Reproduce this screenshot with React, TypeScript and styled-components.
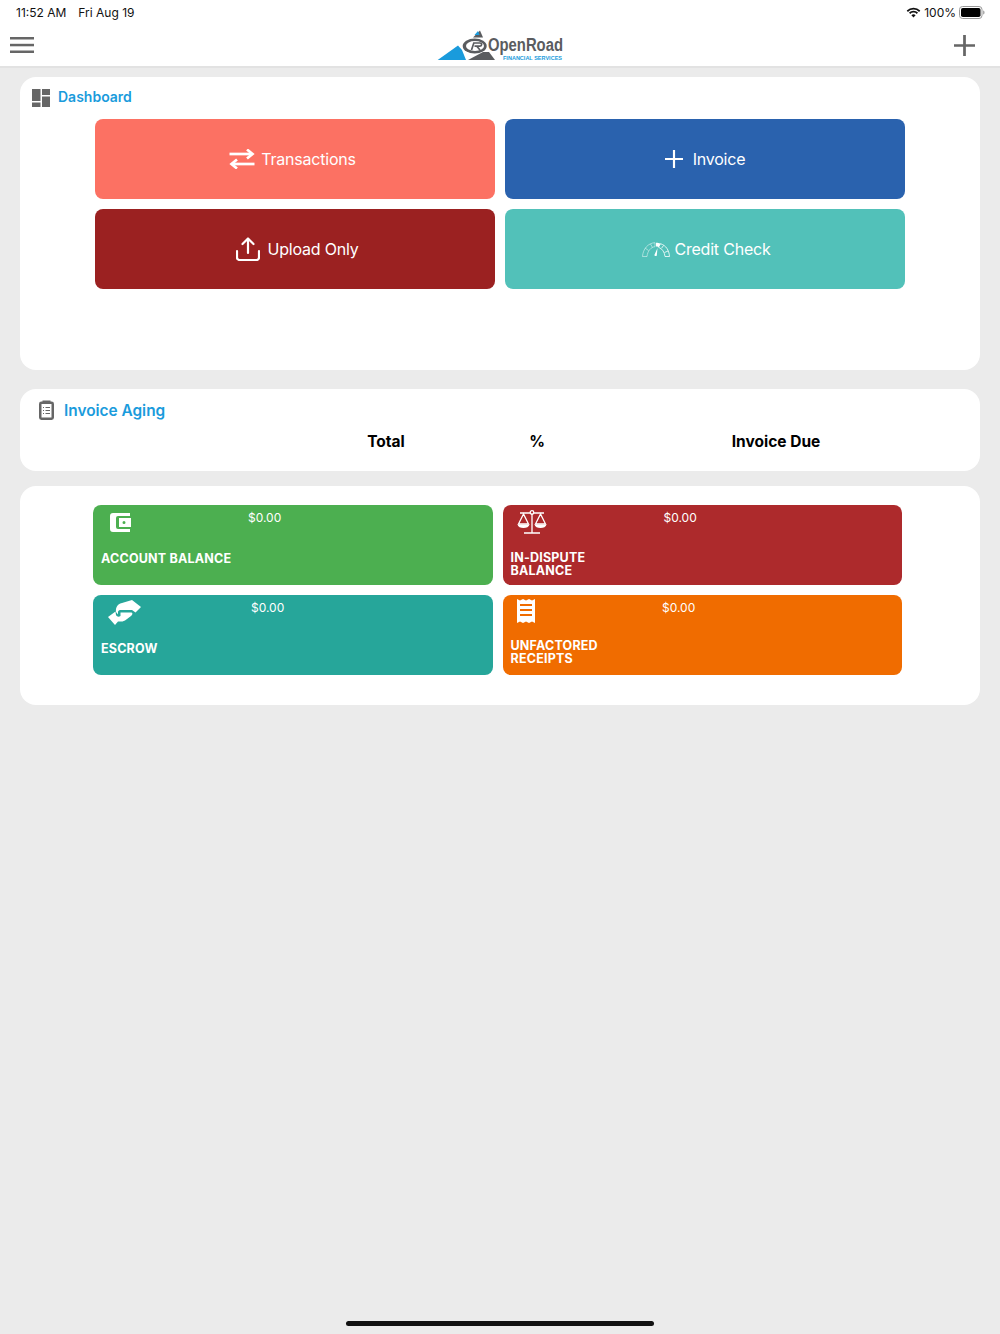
import React from "react";
import styled, { createGlobalStyle } from "styled-components";

const Global = createGlobalStyle`
  html, body { margin: 0; padding: 0; background: #ebebeb; }
  body { font-family: Inter, "Noto Sans", "Liberation Sans", sans-serif; }
  * { box-sizing: border-box; }
`;

const Page = styled.div`
  width: 1000px;
  height: 1334px;
  display: flex;
  flex-direction: column;
  background: #ebebeb;
  overflow: hidden;
`;

const Header = styled.header`
  background: #fff;
  height: 68px;
  border-bottom: 2px solid #e2e2e2;
  flex: none;
`;

const StatusBar = styled.div`
  height: 24px;
  padding: 0 15px 0 16px;
  display: flex;
  align-items: center;
  justify-content: space-between;
  font-size: 12px;
  color: #111;
`;

const StatusGroup = styled.div<{ $gap: number }>`
  display: flex;
  align-items: center;
  gap: ${(p) => p.$gap}px;
`;

const NavBar = styled.div`
  height: 42px;
  padding: 0 25px 0 10px;
  display: grid;
  grid-template-columns: 415px 150px 1fr;
  align-items: center;
`;

const NavEnd = styled.div`
  display: flex;
  justify-content: flex-end;
`;

const NavStart = styled.div`
  display: flex;
`;

const Content = styled.main`
  padding: 9px 20px 0;
  display: flex;
  flex-direction: column;
`;

const Card = styled.section<{ $height: number; $after: number }>`
  background: #fff;
  border-radius: 16px;
  height: ${(p) => p.$height}px;
  margin-bottom: ${(p) => p.$after}px;
`;

const DashHead = styled.div`
  height: 42px;
  padding: 0 0 0 12px;
  display: flex;
  align-items: center;
  gap: 8px;
  font-size: 14px;
  font-weight: 600;
  color: #1a9bdc;
`;

const DashTitle = styled.span`
  padding-bottom: 4px;
`;

const ActionGrid = styled.div`
  width: 810px;
  margin: 0 auto;
  display: grid;
  grid-template-columns: 400px 400px;
  grid-auto-rows: 80px;
  gap: 10px;
`;

const ActionButton = styled.button<{ $bg: string; $gap: number; $left?: number; $right?: number }>`
  border: 0;
  border-radius: 8px;
  background: ${(p) => p.$bg};
  color: #fff;
  font: 400 16px Inter, "Noto Sans", sans-serif;
  letter-spacing: -0.2px;
  display: flex;
  align-items: center;
  justify-content: center;
  gap: ${(p) => p.$gap}px;
  padding: 0 ${(p) => p.$right ?? 0}px 0 ${(p) => p.$left ?? 0}px;
`;

const AgingHead = styled.div`
  height: 42px;
  padding: 0 0 0 19px;
  display: flex;
  align-items: center;
  gap: 10px;
  font-size: 15.4px;
  font-weight: 600;
  color: #1a9bdc;
`;

const AgingColumns = styled.div`
  display: grid;
  grid-template-columns: 286px 160px 142px 336px;
  padding-top: 1px;
  font-size: 15.5px;
  font-weight: 700;
  color: #000;
  text-align: center;
  line-height: 20px;
`;

const StatGrid = styled.div`
  width: 809px;
  margin-left: 73px;
  padding-top: 19px;
  display: grid;
  grid-template-columns: 400px 399.5px;
  grid-auto-rows: 80px;
  gap: 10px 9.5px;
`;

const StatTile = styled.div<{ $bg: string }>`
  background: ${(p) => p.$bg};
  border-radius: 8px;
  color: #fff;
  padding: 0 8px;
`;

const StatTop = styled.div<{ $valueLeft: number }>`
  height: 36px;
  display: grid;
  grid-template-columns: ${(p) => p.$valueLeft}px 1fr;
  font-size: 12px;
  line-height: 15px;
`;

const StatIcon = styled.div<{ $x: number; $y: number }>`
  padding: ${(p) => p.$y}px 0 0 ${(p) => p.$x}px;
  line-height: 0;
`;

const StatValue = styled.div`
  padding-top: 5px;
`;

const StatLabel = styled.div<{ $top: number }>`
  padding-top: ${(p) => p.$top}px;
  font-size: 12.5px;
  font-weight: 700;
  line-height: 12.5px;
  letter-spacing: 0.2px;
  white-space: pre-line;
`;

const HomeBar = styled.div`
  width: 308px;
  height: 5px;
  border-radius: 3px;
  background: #111;
  margin: auto auto 8px;
`;

const MenuIcon = () => (
  <svg width="24" height="16" viewBox="0 0 24 16">
    <g fill="#666">
      <rect y="0" width="24" height="2.500" />
      <rect y="6.800" width="24" height="2.500" />
      <rect y="13.500" width="24" height="2.500" />
    </g>
  </svg>
);

const PlusIcon = ({ size, color, weight }: { size: number; color: string; weight: number }) => (
  <svg width={size} height={size} viewBox="0 0 20 20">
    <path d="M10 0V20M0 10H20" stroke={color} strokeWidth={weight} fill="none" />
  </svg>
);

const WifiIcon = () => (
  <svg width="15" height="11" viewBox="0 0 15 11">
    <path d="M7.5 2.6a8 8 0 0 1 5.6 2.3l1.2-1.3A9.800 9.800 0 0 0 7.500.8 9.800 9.800 0 0 0 .7 3.600l1.200 1.300a8 8 0 0 1 5.600-2.300z" fill="#111" />
    <path d="M7.500 5.600a4.500 4.500 0 0 1 3.300 1.300l1.200-1.300a6.300 6.300 0 0 0-9 0l1.200 1.300a4.500 4.500 0 0 1 3.300-1.300z" fill="#111" />
    <path d="M7.500 10.500 9.600 8.300a3 3 0 0 0-4.200 0z" fill="#111" />
  </svg>
);

const BatteryIcon = () => (
  <svg width="26" height="13" viewBox="0 0 26 13">
    <rect x="0.500" y="0.500" width="22.500" height="12" rx="3" fill="none" stroke="#999" />
    <rect x="2" y="2" width="19.500" height="9" rx="1.800" fill="#000" />
    <path d="M24.200 4.500c.9.300 1.300 1.100 1.300 2s-.4 1.700-1.300 2z" fill="#999" />
  </svg>
);

const Logo = () => (
  <svg width="150" height="34" viewBox="0 0 150 34">
    <g transform="translate(12 0)">
      <path d="M.7 32 21 17.500 25 22 29 32z" fill="#1a9bdc" />
      <path d="M31 32 46 24l6 0 6 8z" fill="#5a5c5f" />
      <path d="M36 9.500 43 2.500 46 9.500z" fill="#5a5c5f" />
      <path d="M37.500 7 41 3 42.500 7z" fill="#1a9bdc" />
      <ellipse cx="37.700" cy="18" rx="12" ry="7.500" fill="#5a5c5f" />
      <ellipse cx="38" cy="18" rx="9" ry="5" fill="#fff" />
      <path d="M34.500 22 36.800 15H43c2.200 0 2.200 3.200 0 3.200H37.500M40 18.500 43 22" fill="none" stroke="#5a5c5f" strokeWidth="1.700" />
      <text x="51" y="22.500" fontFamily="Liberation Sans, sans-serif" fontSize="17.500" fontWeight="700" fill="#5a5c5f" textLength="75" lengthAdjust="spacingAndGlyphs">OpenRoad</text>
      <text x="66" y="31.500" fontFamily="Liberation Sans, sans-serif" fontSize="6" fontWeight="700" fill="#1a9bdc" textLength="59" lengthAdjust="spacingAndGlyphs">FINANCIAL SERVICES</text>
    </g>
  </svg>
);

const DashIcon = () => (
  <svg width="18" height="18" viewBox="0 0 18 18">
    <g fill="#666">
      <rect x="0" y="0" width="8.500" height="12" />
      <rect x="0" y="13.500" width="8.500" height="4.500" />
      <rect x="10" y="0" width="8" height="6" />
      <rect x="10" y="7.500" width="8" height="10.500" />
    </g>
  </svg>
);

const ClipboardIcon = () => (
  <svg width="15" height="20" viewBox="0 0 15 20">
    <rect x="1.250" y="2.750" width="12.500" height="16" rx="1.200" fill="none" stroke="#666" strokeWidth="2.500" />
    <rect x="3.500" y="0.500" width="8" height="3.500" fill="#666" />
    <path d="M4 7.500h1M6.500 7.500H11M4 10.500h1M6.500 10.500H11M4 13.500h1M6.500 13.500H11" stroke="#666" strokeWidth="1.200" />
  </svg>
);

const TransferIcon = () => (
  <svg width="26" height="20" viewBox="0 0 26 20">
    <g fill="none" stroke="#fff" strokeWidth="2.700">
      <path d="M0.500 5H23" />
      <path d="M18 .5 23.500 5 18 9.500" />
      <path d="M25.500 15H3" />
      <path d="M8 10.500 2.500 15 8 19.500" />
    </g>
  </svg>
);

const UploadIcon = () => (
  <svg width="24" height="24" viewBox="0 0 24 24">
    <g fill="none" stroke="#fff" strokeWidth="2.200" strokeLinecap="round" strokeLinejoin="round">
      <path d="M12 16V1.500M6.500 7 12 1.500 17.500 7" />
      <path d="M1 14v6.500a2.500 2.500 0 0 0 2.500 2.500h17a2.500 2.500 0 0 0 2.500-2.500V14" />
    </g>
  </svg>
);

const GaugeIcon = () => (
  <svg width="28" height="15" viewBox="0 0 28 15">
    <g fill="none" stroke="#fff" strokeWidth="0.700" opacity="0.700">
      <path d="M0.500 14.500C1 7 6 1 13 .7v4C9 5 5.500 9 5 14.500z" />
      <path d="M3 6l3.500 2.500M8.500 2l2 3.500" />
    </g>
    <path d="M14 .7c2 0 3 .3 4.500 1l-2 3.500c-1-.5-1.500-.6-2.500-.6z" fill="#fff" />
    <path d="M18.500 1.700C24 3.500 27 8 27.500 14.500H23C22.500 10 20.500 7 16.500 5.200zM21.500 3.500l-2 2.800M26 9l-3.500 1.500" fill="none" stroke="#fff" strokeWidth="0.800" />
    <path d="M15.500 6 14.800 13.500a1.300 1.300 0 0 1-2.400-.6z" fill="#fff" />
  </svg>
);

const WalletIcon = () => (
  <svg width="21" height="19" viewBox="0 0 21 19">
    <path fillRule="evenodd" d="M3 0h17v3H8a2 2 0 0 0-2 2v9a2 2 0 0 0 2 2h12v3H3a3 3 0 0 1-3-3V3a3 3 0 0 1 3-3zM9 5h12v9H9zm5 3a1.500 1.500 0 1 0 0 3 1.500 1.500 0 0 0 0-3z" fill="#fff" />
  </svg>
);

const ScalesIcon = () => (
  <svg width="30" height="25" viewBox="0 0 30 25">
    <g fill="none" stroke="#fff" strokeWidth="1.300">
      <path d="M15 3.500V23M7 23h16M3 3h10M17 3h10" />
      <circle cx="15" cy="2.500" r="1.800" />
      <path d="M6.500 4 1.500 14h10zM23.500 4l-5 10h10z" />
    </g>
    <path d="M.5 14.500h12c-.5 2.500-3 3.500-6 3.500s-5.500-1-6-3.500zM17.500 14.500h12c-.5 2.500-3 3.500-6 3.500s-5.500-1-6-3.500z" fill="#fff" />
  </svg>
);

const HandshakeIcon = () => (
  <svg width="33" height="25" viewBox="0 0 33 25">
    <path d="M24 0 33 7 27.500 12.500 24 10H12c-1 0-2 1-2 2v2.500L8 12C7.500 8 9 4 14 3z" fill="#fff" />
    <path d="M0 17 7.500 11.500 8 15c1 2 3 2 4.500 1v-3.500H23.500c1.500.5 1 2.500-.5 3.500L17 20.500c-3 1.500-5 1-7 1L7 25z" fill="#fff" />
  </svg>
);

const ReceiptIcon = () => (
  <svg width="18" height="24" viewBox="0 0 18 24">
    <path fillRule="evenodd" d="M0 0l3 1.500L6 0l3 1.500L12 0l3 1.500L18 0v24l-3-1.500-3 1.500-3-1.500L6 24l-3-1.500L0 24zM3 5v2h12V5zm0 5v2h12v-2zm0 5v2h12v-2z" fill="#fff" />
  </svg>
);

const stats = [
  { bg: "#4caf50", value: "$0.00", valueLeft: 147, x: 9, y: 8, icon: <WalletIcon />, label: "ACCOUNT BALANCE", top: 12 },
  { bg: "#ad2a2c", value: "$0.00", valueLeft: 153, x: 6, y: 5, icon: <ScalesIcon />, label: "IN-DISPUTE\nBALANCE", top: 11 },
  { bg: "#26a69a", value: "$0.00", valueLeft: 150, x: 7, y: 5, icon: <HandshakeIcon />, label: "ESCROW", top: 12 },
  { bg: "#f06c00", value: "$0.00", valueLeft: 151.5, x: 6, y: 4, icon: <ReceiptIcon />, label: "UNFACTORED\nRECEIPTS", top: 9 },
];

export default function App() {
  return (
    <Page>
      <Global />
      <Header>
        <StatusBar>
          <StatusGroup $gap={12}>
            <span>11:52 AM</span>
            <span>Fri Aug 19</span>
          </StatusGroup>
          <StatusGroup $gap={3}>
            <WifiIcon />
            <span>100%</span>
            <BatteryIcon />
          </StatusGroup>
        </StatusBar>
        <NavBar>
          <NavStart>
            <MenuIcon />
          </NavStart>
          <Logo />
          <NavEnd>
            <PlusIcon size={21} color="#666" weight={2.600} />
          </NavEnd>
        </NavBar>
      </Header>
      <Content>
        <Card $height={293} $after={19}>
          <DashHead>
            <DashIcon />
            <DashTitle>Dashboard</DashTitle>
          </DashHead>
          <ActionGrid>
            <ActionButton $bg="#fc7163" $gap={6} $right={5}>
              <TransferIcon />
              Transactions
            </ActionButton>
            <ActionButton $bg="#2a62ae" $gap={10}>
              <PlusIcon size={18} color="#fff" weight={2.400} />
              Invoice
            </ActionButton>
            <ActionButton $bg="#9b2121" $gap={7} $left={5}>
              <UploadIcon />
              Upload Only
            </ActionButton>
            <ActionButton $bg="#52c1b9" $gap={4} $left={3}>
              <GaugeIcon />
              Credit Check
            </ActionButton>
          </ActionGrid>
        </Card>
        <Card $height={82} $after={15}>
          <AgingHead>
            <ClipboardIcon />
            <span>Invoice Aging</span>
          </AgingHead>
          <AgingColumns>
            <span />
            <span>Total</span>
            <span>%</span>
            <span>Invoice Due</span>
          </AgingColumns>
        </Card>
        <Card $height={219} $after={0}>
          <StatGrid>
            {stats.map((s) => (
              <StatTile key={s.label} $bg={s.bg}>
                <StatTop $valueLeft={s.valueLeft}>
                  <StatIcon $x={s.x} $y={s.y}>{s.icon}</StatIcon>
                  <StatValue>{s.value}</StatValue>
                </StatTop>
                <StatLabel $top={s.top}>{s.label}</StatLabel>
              </StatTile>
            ))}
          </StatGrid>
        </Card>
      </Content>
      <HomeBar />
    </Page>
  );
}
